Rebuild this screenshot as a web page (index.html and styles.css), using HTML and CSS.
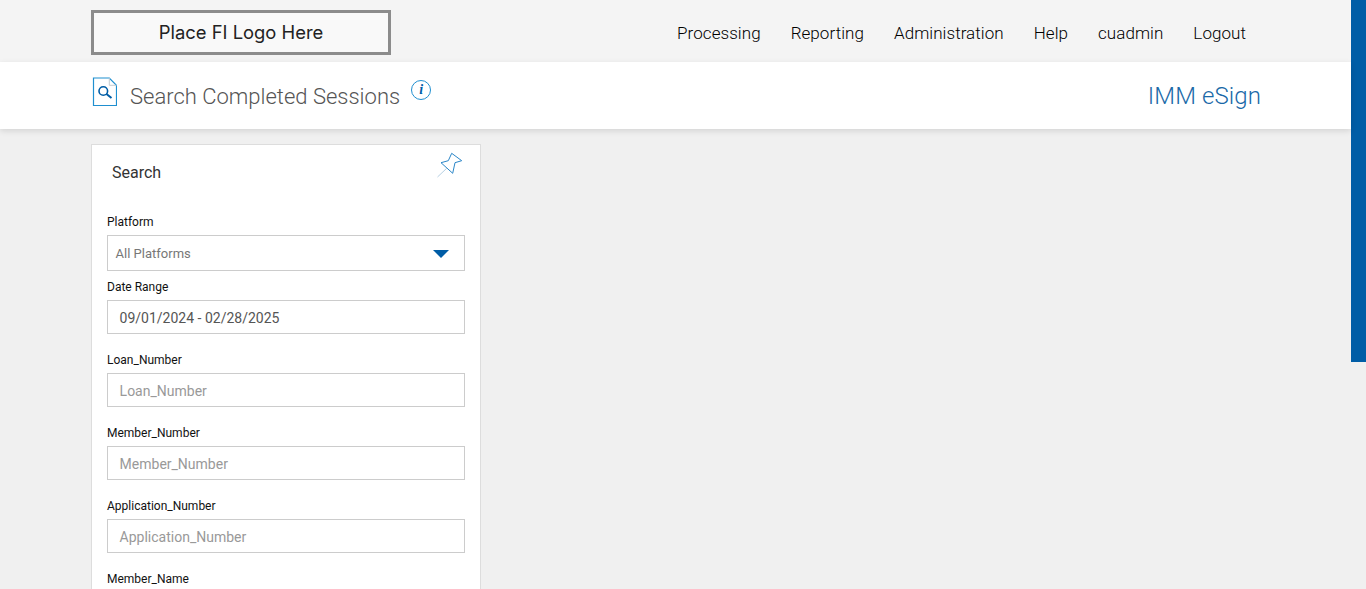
FILE: index.html
```html
<!DOCTYPE html>
<html lang="en">
<head>
<meta charset="utf-8">
<title>Search Completed Sessions</title>
<link rel="stylesheet" href="styles.css">
</head>
<body>
<div class="app">
  <div class="main">
    <header class="topbar">
      <div class="logo">Place FI Logo Here</div>
      <nav class="nav">
        <a>Processing</a><a>Reporting</a><a>Administration</a><a>Help</a><a>cuadmin</a><a>Logout</a>
      </nav>
    </header>
    <section class="titlebar">
      <svg class="doc-icon" width="26" height="32" viewBox="0 0 26 32" fill="none">
        <path d="M2.5 2H18.3L25.5 9.3V29.5H2.5Z" stroke="#1f8fd0" stroke-width="1.2"/>
        <path d="M18.3 2V9.3H25.5" stroke="#c3ccd3" stroke-width="1"/>
        <circle cx="12.3" cy="15" r="4.3" stroke="#005da6" stroke-width="1.6"/>
        <path d="M15.5 18L20.5 22" stroke="#005da6" stroke-width="2"/>
      </svg>
      <h1 class="page-title">Search Completed Sessions</h1>
      <span class="info">i</span>
      <div class="brand">IMM eSign</div>
    </section>
    <section class="content">
      <aside class="panel">
        <div class="panel-head">
          <h2 class="panel-title">Search</h2>
          <svg class="pin" width="26" height="26" viewBox="0 0 26 26" fill="none">
            <path d="M14.7 1.3L24.7 8.7L18 10.7L15.7 21.3L4 10.7L11.3 8.7Z" stroke="#2a86c8" stroke-width="1"/>
            <path d="M10 16L0.5 25" stroke="#b5cfe2" stroke-width="1"/>
          </svg>
        </div>
        <div class="field tight">
          <label class="label">Platform</label>
          <div class="select">All Platforms<span class="caret"></span></div>
        </div>
        <div class="field">
          <label class="label">Date Range</label>
          <div class="input value">09/01/2024 - 02/28/2025</div>
        </div>
        <div class="field">
          <label class="label">Loan_Number</label>
          <div class="input">Loan_Number</div>
        </div>
        <div class="field">
          <label class="label">Member_Number</label>
          <div class="input">Member_Number</div>
        </div>
        <div class="field">
          <label class="label">Application_Number</label>
          <div class="input">Application_Number</div>
        </div>
        <div class="field">
          <label class="label">Member_Name</label>
        </div>
      </aside>
    </section>
  </div>
  <div class="rail"><div class="thumb"></div></div>
</div>
</body>
</html>
```
FILE: styles.css
```css
* { box-sizing: border-box; }
html, body { margin: 0; height: 100%; overflow: hidden; }
body { font-family: Roboto, "Liberation Sans", sans-serif; background: #f0f0f0; color: #222; }
.app { display: flex; height: 589px; overflow: hidden; }
.main { flex: 1; min-width: 0; }
.rail { width: 15px; flex: none; }
.thumb { height: 362px; background: #005da6; }

.topbar { height: 62px; background: #f4f4f4; display: flex; align-items: flex-start; padding: 10px 105px 0 91px; justify-content: space-between; }
.logo { width: 300px; height: 45px; border: 3px solid #8c8c8c; background: #f9f9f9; display: flex; align-items: center; justify-content: center; padding-bottom: 1px; font-family: Inter, sans-serif; font-size: 18.4px; color: #222; }
.nav { display: flex; gap: 30px; padding-top: 13px; font-size: 17px; font-weight: 300; color: #000; line-height: 20px; letter-spacing: 0.06px; }

.titlebar { height: 67px; background: #fff; box-shadow: 0 2px 6px rgba(0,0,0,.12); display: flex; align-items: flex-start; padding: 0 90px 0 91px; position: relative; }
.doc-icon { margin-top: 14px; flex: none; }
.page-title { margin: 20px 0 0 13px; font-size: 22px; font-weight: 300; color: #555; line-height: 30px; }
.info { margin: 17.5px 0 0 11px; width: 20px; height: 20px; border: 1px solid #1f8fd0; border-radius: 50%; font: italic bold 14px/18px "Liberation Serif", serif; color: #005da6; text-align: center; }
.brand { margin: 19px 0 0 auto; font-size: 24px; font-weight: 300; color: #1a69a8; line-height: 30px; letter-spacing: 0.1px; }

.content { padding: 15px 0 0 91px; }
.panel { width: 390px; height: 460px; background: #fff; border: 1px solid #ddd; padding: 0 15px; }
.panel-head { display: flex; justify-content: space-between; height: 70px; }
.panel-title { margin: 18px 0 0 5px; font-size: 16px; font-weight: 400; color: #333; line-height: 19px; }
.pin { margin: 7px 2px 0 0; }
.field { margin-bottom: 19px; }
.field.tight { margin-bottom: 9px; }
.label { display: block; font-size: 12px; line-height: 14px; color: #111; margin-bottom: 6px; }
.select { height: 36px; border: 1px solid #ccc; padding-left: 7.6px; font-size: 13px; line-height: 35px; color: #777; position: relative; }
.caret { position: absolute; right: 15px; top: 14px; border-left: 8px solid transparent; border-right: 8px solid transparent; border-top: 8px solid #005da6; }
.input { height: 34px; border: 1px solid #ccc; padding-left: 11.6px; font-size: 14px; line-height: 34px; color: #999; }
.input.value { color: #555; }
```
